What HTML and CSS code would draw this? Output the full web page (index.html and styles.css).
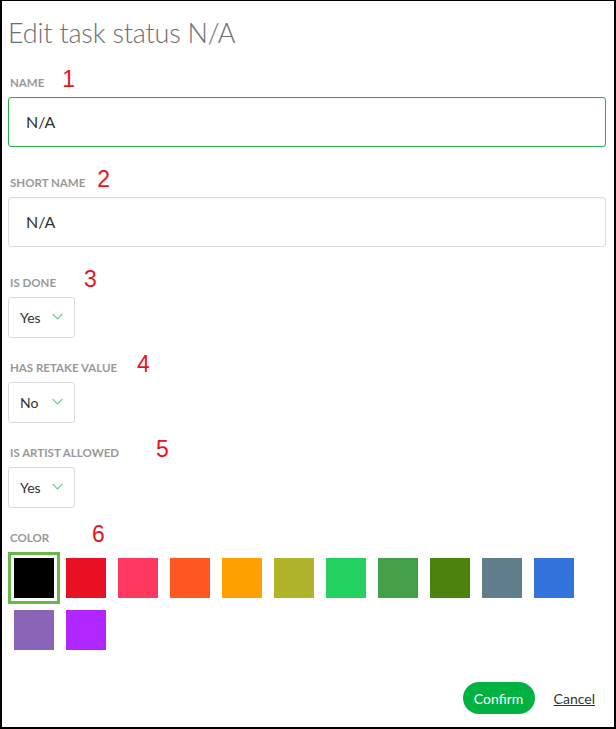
FILE: index.html
```html
<!DOCTYPE html>
<html>
<head>
<meta charset="utf-8">
<link rel="stylesheet" href="styles.css">
</head>
<body>
<div class="frame">
  <h1 class="title">Edit task status N/A</h1>

  <div class="label-row"><span class="label">Name</span><span class="mark m1">1</span></div>
  <div class="input focused">N/A</div>

  <div class="label-row gap-lg"><span class="label">Short name</span><span class="mark m2">2</span></div>
  <div class="input">N/A</div>

  <div class="label-row gap-lg"><span class="label">Is done</span><span class="mark m3">3</span></div>
  <div class="select"><span>Yes</span><svg class="chev" width="11" height="7" viewBox="0 0 11 7"><path d="M0.5 0.8 L5.5 5.8 L10.5 0.8" fill="none" stroke="#5cd18f" stroke-width="1.2"/></svg></div>

  <div class="label-row gap-sm"><span class="label">Has retake value</span><span class="mark m4">4</span></div>
  <div class="select"><span>No</span><svg class="chev" width="11" height="7" viewBox="0 0 11 7"><path d="M0.5 0.8 L5.5 5.8 L10.5 0.8" fill="none" stroke="#5cd18f" stroke-width="1.2"/></svg></div>

  <div class="label-row gap-sm"><span class="label">Is artist allowed</span><span class="mark m5">5</span></div>
  <div class="select"><span>Yes</span><svg class="chev" width="11" height="7" viewBox="0 0 11 7"><path d="M0.5 0.8 L5.5 5.8 L10.5 0.8" fill="none" stroke="#5cd18f" stroke-width="1.2"/></svg></div>

  <div class="label-row gap-sm"><span class="label">Color</span><span class="mark m6">6</span></div>
  <div class="colors">
    <div class="swatch selected"><div class="chip c-black"></div></div>
    <div class="swatch"><div class="chip c-red"></div></div>
    <div class="swatch"><div class="chip c-pink"></div></div>
    <div class="swatch"><div class="chip c-orange"></div></div>
    <div class="swatch"><div class="chip c-amber"></div></div>
    <div class="swatch"><div class="chip c-olive"></div></div>
    <div class="swatch"><div class="chip c-green"></div></div>
    <div class="swatch"><div class="chip c-mgreen"></div></div>
    <div class="swatch"><div class="chip c-dgreen"></div></div>
    <div class="swatch"><div class="chip c-slate"></div></div>
    <div class="swatch"><div class="chip c-blue"></div></div>
    <div class="swatch"><div class="chip c-purple"></div></div>
    <div class="swatch"><div class="chip c-violet"></div></div>
  </div>

  <div class="actions">
    <button class="confirm">Confirm</button>
    <a class="cancel">Cancel</a>
  </div>
</div>
</body>
</html>
```

FILE: styles.css
```css
* { box-sizing: border-box; }
html, body { margin: 0; padding: 0; background: #fff; }
body { font-family: Lato, "Open Sans", sans-serif; color: #333; }

.frame {
  width: 616px;
  height: 729px;
  border-top: 1px solid #000;
  border-left: 2px solid #000;
  border-right: 2px solid #000;
  border-bottom: 2px solid #000;
  padding: 0 8px 0 6px;
  position: relative;
}

.title {
  margin: 0;
  padding-top: 14px;
  height: 70px;
  font-size: 27px;
  line-height: 36px;
  font-weight: 300;
  color: #6e6e6e;
  letter-spacing: -0.2px;
}

.label-row {
  display: flex;
  align-items: baseline;
  height: 16px;
  line-height: 16px;
  margin-bottom: 10px;
}
.label-row.gap-lg { margin-top: 24px; }
.label-row.gap-sm { margin-top: 18px; }

.label {
  font-size: 11.5px;
  font-weight: 700;
  text-transform: uppercase;
  color: #999999;
  padding-left: 2px;
}

.mark {
  font-family: "Liberation Sans", Arial, sans-serif;
  font-size: 23px;
  font-weight: 400;
  color: #e8141c;
  line-height: 16px;
}
.m1 { margin-left: 18px; }
.m2 { margin-left: 12px; }
.m3 { margin-left: 28px; }
.m4 { margin-left: 20px; }
.m5 { margin-left: 37px; }
.m6 { margin-left: 43px; }

.input {
  height: 50px;
  border: 1px solid #dcdcdc;
  border-radius: 3px;
  padding-left: 17px;
  font-size: 16px;
  line-height: 48px;
  color: #333;
  box-shadow: inset 0 1px 2px rgba(0,0,0,0.04);
}
.input.focused { border-color: #1fb14a; }

.select {
  width: 67px;
  height: 41px;
  border: 1px solid #dadada;
  border-radius: 3px;
  display: flex;
  align-items: center;
  padding-left: 11px;
  font-size: 14px;
  color: #333;
}
.select span { width: 32px; }
.chev { display: block; margin-top: -2px; }

.colors {
  display: flex;
  flex-wrap: wrap;
  margin-top: 1px;
}
.swatch {
  width: 52px;
  height: 52px;
  padding: 3px;
  border: 3px solid transparent;
}
.swatch.selected { border-color: #67b94a; }
.chip { width: 40px; height: 40px; }
.c-black { background: #000000; }
.c-red { background: #e81123; }
.c-pink { background: #ff3860; }
.c-orange { background: #ff5722; }
.c-amber { background: #ffa000; }
.c-olive { background: #afb42b; }
.c-green { background: #22d160; }
.c-mgreen { background: #43a047; }
.c-dgreen { background: #4b830d; }
.c-slate { background: #607d8b; }
.c-blue { background: #3273dc; }
.c-purple { background: #8a64b7; }
.c-violet { background: #b026ff; }

.actions {
  position: absolute;
  right: 19px;
  bottom: 13px;
  display: flex;
  align-items: center;
}
.confirm {
  width: 72px;
  height: 32px;
  border: none;
  border-radius: 16px;
  background: #00b242;
  color: #fff;
  font-family: Lato, "Open Sans", sans-serif;
  font-size: 14px;
  padding: 0;
}
.cancel {
  margin-left: 19px;
  font-size: 14px;
  color: #333;
  text-decoration: underline;
}
```
